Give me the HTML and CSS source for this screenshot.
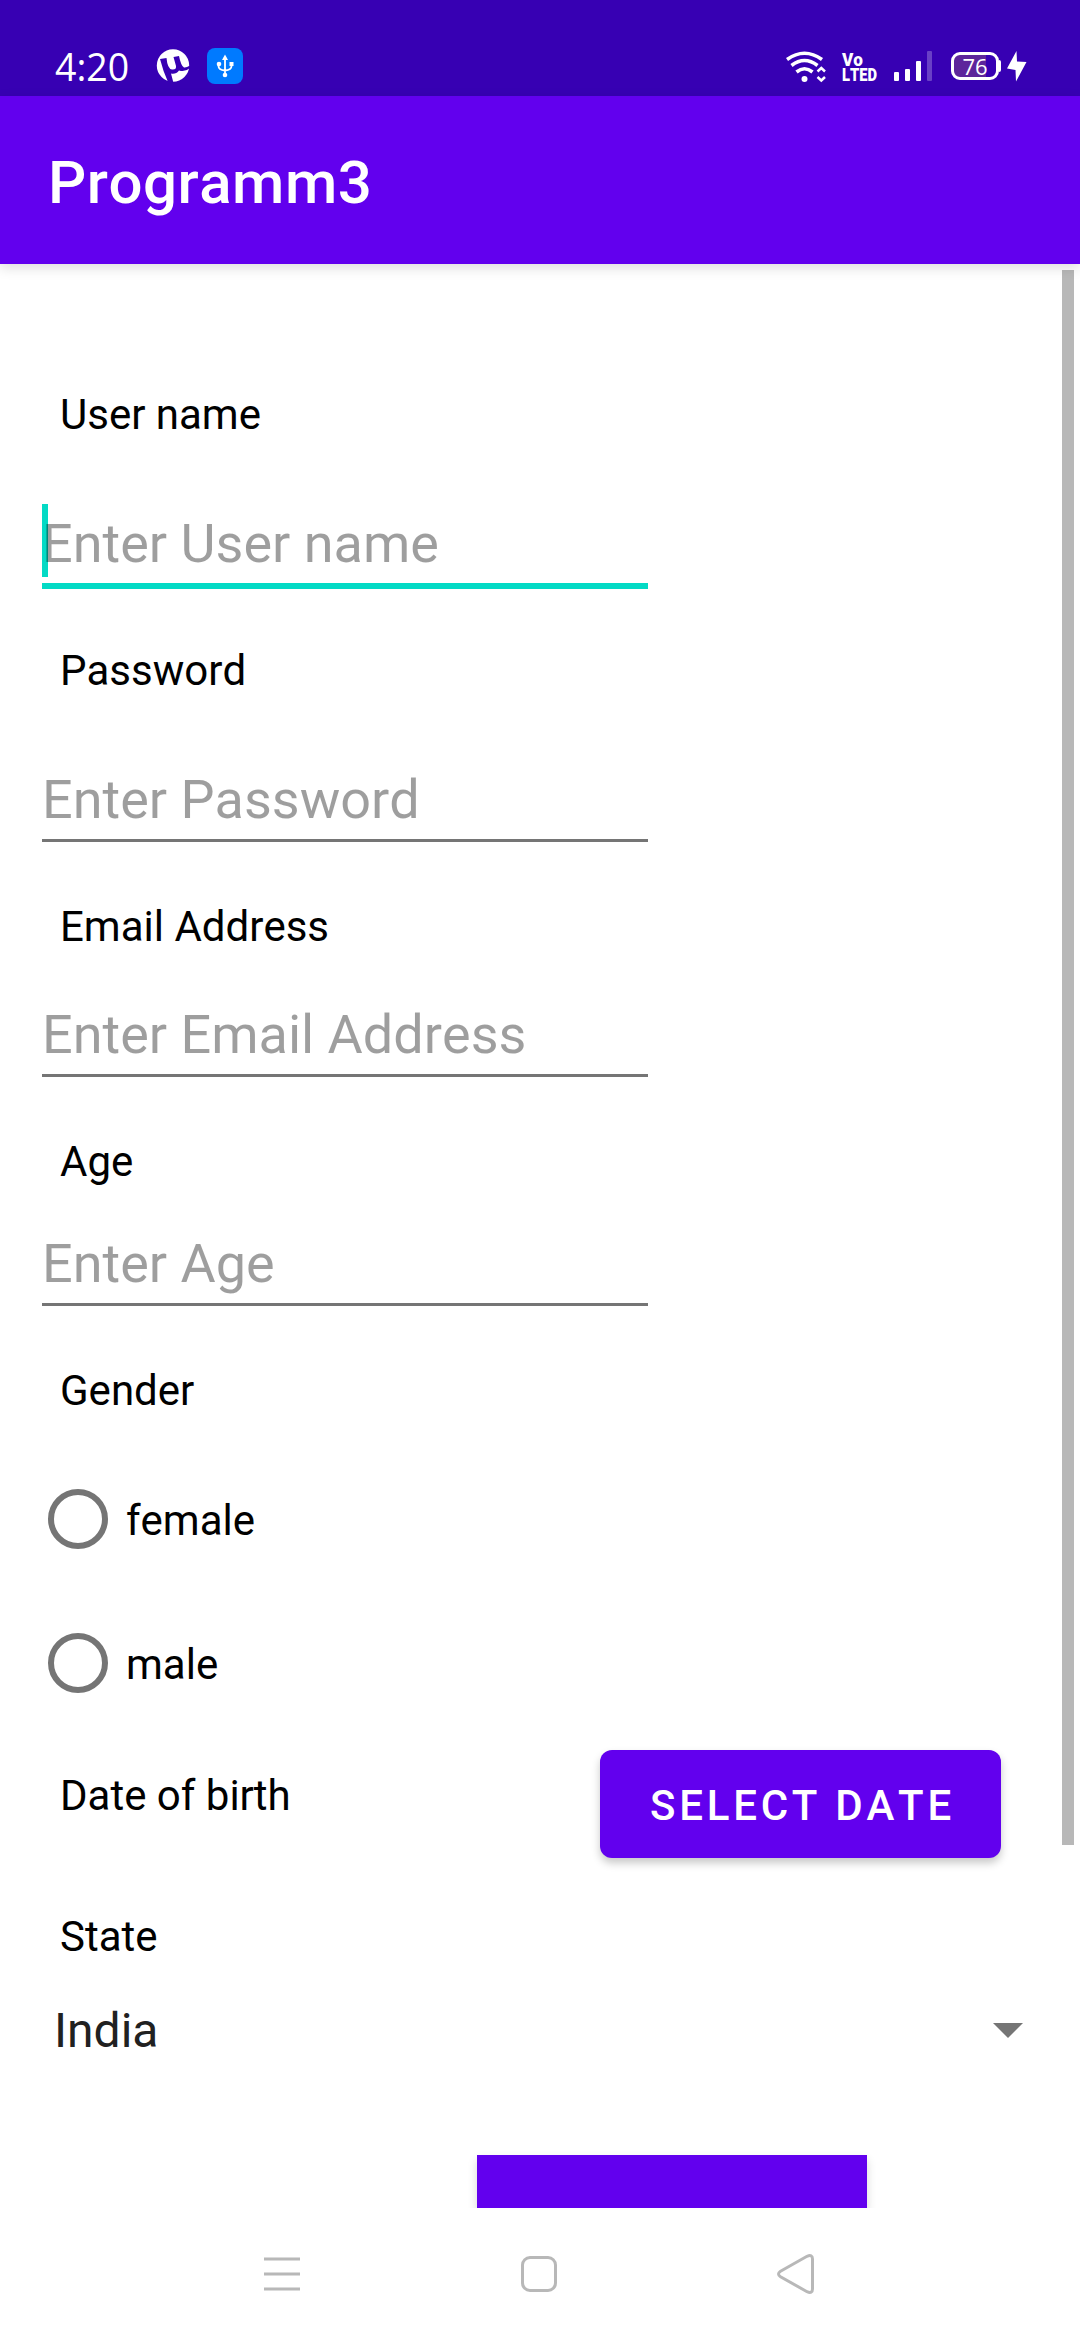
FILE: index.html
```html
<!DOCTYPE html>
<html lang="en">
<head>
<meta charset="utf-8">
<title>Programm3</title>
<link rel="stylesheet" href="styles.css">
</head>
<body>
<div class="screen">
  <header class="status">
    <span class="clock">4:20</span>
    <svg class="torrent" width="34" height="34" viewBox="0 0 34 34">
      <circle cx="17" cy="16.500" r="16.200" fill="#fff"/>
      <path d="M4 10 10.500 9Q11.500 20 16 20.500Q20.500 21 20 17L17.500 8 23 7Q25 17 28 18.500Q30 19 34 16.500V19Q29 23.500 23 21.500Q20 25.500 15 24.500L17.500 34 12 33Q7 22 4 10Z" fill="#3700b3"/>
    </svg>
    <svg class="usb" width="36" height="36" viewBox="0 0 36 36">
      <rect width="36" height="36" rx="8" fill="#007aff"/>
      <path d="M18 9V27M11.500 15V18Q11.500 22 18 22.500Q24.500 22 24.500 18V15" fill="none" stroke="#fff" stroke-width="1.800"/>
      <path d="M18 6.500 21 12H15Z" fill="#fff"/>
      <circle cx="12" cy="16" r="2.300" fill="#fff"/>
      <rect x="22.500" y="14" width="4" height="4" fill="#fff"/>
      <circle cx="18" cy="27" r="2.300" fill="#fff"/>
    </svg>
    <span class="grow"></span>
    <svg class="wifi" width="40" height="32" viewBox="0 0 40 32">
      <g fill="none" stroke="#fff" stroke-width="3.600">
        <path d="M1 8.500Q18.500 -4 36 8.500"/>
        <path d="M5.500 14.500Q18.500 4.500 31.500 14.500"/>
        <path d="M10.500 21Q18.500 14.500 26.500 21"/>
      </g>
      <circle cx="18.500" cy="28" r="3" fill="#fff"/>
      <path d="M31.500 20.500 35.300 17 39 20.500M31.500 26 35.300 29.500 39 26" fill="none" stroke="#fff" stroke-width="2.500"/>
    </svg>
    <svg class="volte" width="36" height="32" viewBox="0 0 36 32">
      <text x="0" y="14.500" textLength="21" lengthAdjust="spacingAndGlyphs">Vo</text>
      <text x="0" y="30" textLength="35" lengthAdjust="spacingAndGlyphs">LTED</text>
    </svg>
    <svg class="signal" width="39" height="31" viewBox="0 0 39 31">
      <g fill="#fff">
        <rect x="0" y="21" width="5" height="9" rx="1"/>
        <rect x="11" y="18" width="5" height="12" rx="1"/>
        <rect x="22" y="10" width="5" height="20" rx="1"/>
        <rect x="33" y="0" width="5" height="30" rx="1" opacity=".25"/>
      </g>
    </svg>
    <span class="battery">76</span>
    <span class="nub"></span>
    <svg class="bolt" width="22" height="32" viewBox="0 0 22 32">
      <path d="M10.500 0 1 17.500 9.500 19 10 30.500 20.500 11 11 10.500Z" fill="#fff"/>
    </svg>
  </header>
  <div class="toolbar">Programm3</div>
  <main class="content">
    <label class="label first">User name</label>
    <div class="field tall focused"><span class="caret"></span>Enter User name</div>
    <label class="label">Password</label>
    <div class="field tall">Enter Password</div>
    <label class="label">Email Address</label>
    <div class="field email">Enter Email Address</div>
    <label class="label">Age</label>
    <div class="field age">Enter Age</div>
    <label class="label">Gender</label>
    <div class="radios">
      <div class="radio"><span class="ring"></span><span class="option">female</span></div>
      <div class="radio"><span class="ring"></span><span class="option">male</span></div>
    </div>
    <div class="birth">
      <span class="label">Date of birth</span>
      <button class="select">SELECT DATE</button>
    </div>
    <span class="label state">State</span>
    <div class="spinner">India
      <svg width="30" height="15" viewBox="0 0 30 15"><path d="M0 0H30L15 15Z" fill="#757575"/></svg>
    </div>
    <div class="submit"></div>
    <div class="scrollbar"></div>
  </main>
  <nav class="nav">
    <svg width="36" height="34" viewBox="0 0 36 34"><path d="M0 2H36M0 17H36M0 32H36" stroke="#b8b8b8" stroke-width="3"/></svg>
    <svg width="36" height="36" viewBox="0 0 36 36"><rect x="1.500" y="1.500" width="33" height="33" rx="7.500" fill="none" stroke="#b8b8b8" stroke-width="3"/></svg>
    <svg width="37" height="40" viewBox="0 0 37 40"><path d="M3.500 17.300 30 2.300Q35.500 0 35.500 5V35Q35.500 40 30 37.700L3.500 22.700Q-.5 20 3.500 17.300Z" fill="none" stroke="#b8b8b8" stroke-width="3"/></svg>
  </nav>
</div>
</body>
</html>
```
FILE: styles.css
```css
* { box-sizing: border-box; }
body { margin: 0; background: #fff; font-family: Roboto, sans-serif; font-kerning: none; }
svg { display: block; flex: none; }
.screen { width: 1080px; height: 2340px; display: flex; flex-direction: column; overflow: hidden; }

.status { height: 96px; flex: none; background: #3700b3; color: #fff; display: flex; align-items: flex-start; }
.clock { width: 101px; margin-top: 45px; margin-left: 55px; font: 37.5px/44px "Open Sans", sans-serif; }
.torrent { margin-top: 49px; }
.usb { margin: 48px 0 0 17px; }
.grow { flex: 1; }
.wifi { margin: 51px 16px 0 0; }
.volte { margin: 51px 16px 0 0; overflow: visible; fill: #fff; font-size: 18.5px; font-weight: 900; }
.signal { margin: 51px 18px 0 0; }
.battery { width: 48px; height: 28px; margin-top: 52px; border: 3px solid #fff; border-radius: 9px; background: linear-gradient(to right, #5d259b 32px, #3700b3 32px); text-align: center; font: 22px/22px "Open Sans", sans-serif; }
.nub { width: 2px; height: 12px; margin: 60px 5px 0 0; background: #fff; border-radius: 0 2px 2px 0; }
.bolt { margin: 51px 52px 0 0; }

.toolbar { height: 168px; flex: none; padding-left: 48px; background: #6200ee; color: #fff; font-size: 60px; font-weight: 500; line-height: 173px; letter-spacing: .5px; box-shadow: 0 4px 12px rgba(0, 0, 0, .13); z-index: 1; }

.content { height: 1944px; flex: none; position: relative; display: flex; flex-direction: column; align-items: flex-start; overflow: hidden; }
.label { height: 57px; line-height: 57px; margin-left: 60px; font-size: 42px; color: #000; flex: none; }
.label.first { margin-top: 122px; }
.field { position: relative; isolation: isolate; width: 606px; height: 82px; flex: none; margin: 0 0 56px 42px; padding-top: 3px; border-bottom: 3px solid #757575; font-size: 54px; line-height: 73px; color: rgba(0, 0, 0, .38); white-space: nowrap; }
.field.tall { margin-top: 61px; }
.field.email { margin-top: 40px; }
.field.age { margin-top: 34px; }
.field.focused { height: 85px; margin-bottom: 53px; border-bottom: 6px solid #03dac5; }
.caret { position: absolute; z-index: -1; left: 0; top: 0; width: 6px; height: 73px; background: #03dac5; }

.radios { display: flex; flex-direction: column; margin-top: 28px; }
.radio { display: flex; align-items: center; height: 144px; padding-left: 48px; gap: 18px; font-size: 42px; }
.ring { width: 60px; height: 60px; border: 6px solid #757575; border-radius: 50%; }
.option { padding-top: 3px; }

.birth { display: flex; width: 1001px; margin-top: 15px; justify-content: space-between; }
.birth .label { margin-top: 17px; }
.select { width: 401px; height: 108px; padding: 3px 0 0 4px; border: 0; border-radius: 12px; background: #6200ee; color: #fff; font: 500 42px Roboto, sans-serif; font-kerning: none; letter-spacing: 3.75px; box-shadow: 0 5px 8px rgba(0, 0, 0, .22); }
.state { margin-top: 50px; }
.spinner { display: flex; width: 1023px; height: 57px; margin-top: 37px; padding-left: 54px; justify-content: space-between; align-items: center; font-size: 48px; line-height: 57px; color: #212121; }
.submit { width: 390px; height: 53px; flex: none; margin: 96px 0 0 477px; background: #6200ee; box-shadow: 0 5px 9px rgba(0, 0, 0, .16); }
.scrollbar { position: absolute; top: 6px; right: 6px; width: 12px; height: 1575px; background: #b8b8b8; }

.nav { height: 132px; flex: none; display: flex; align-items: center; justify-content: space-between; padding: 0 266px 0 264px; }
```
